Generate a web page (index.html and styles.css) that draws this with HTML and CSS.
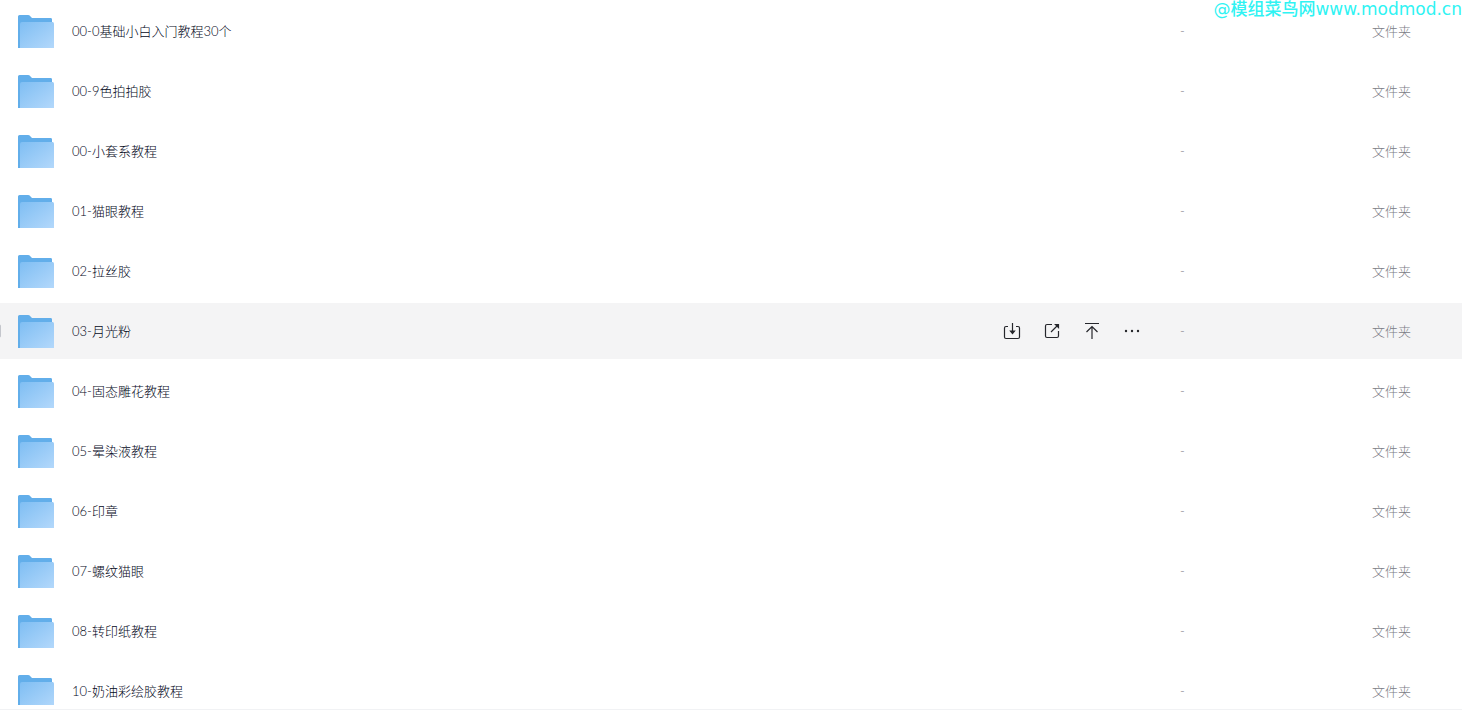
FILE: index.html
```
<!doctype html>
<html lang="zh-CN">
<head>
	<meta charset="utf-8">
	<title>文件列表</title>
	<link rel="stylesheet" href="styles.css">
</head>
<body>
	<!-- 图标 -->
	<svg class="sprite" aria-hidden="true">
		<defs>
			<linearGradient id="front" x1="0" y1="0" x2="1" y2="1">
				<stop offset="0" stop-color="#7fbef3"/>
				<stop offset="1" stop-color="#b3d8fb"/>
			</linearGradient>
			<symbol id="folder" viewBox="0 0 36 33">
				<path d="M0 1.5Q0 0 1.5 0H10Q11.500 0 12.300 1.200L14 3H33Q34 3 34 4.500V12H3V33H0Z" fill="#62aeea"/>
				<path d="M2 33V9Q2 7 4 7H34.500Q36 7 36 8.500V33Z" fill="url(#front)"/>
			</symbol>
			<symbol id="save" viewBox="0 0 18 18">
				<path d="M5 4.500H3Q1.500 4.500 1.500 6V15Q1.500 16.500 3 16.500H15Q16.500 16.500 16.500 15V6Q16.500 4.500 15 4.500H13M9.500 1V10"/>
				<path d="M7.500 9H11.500L9.500 11.500Z" fill="currentColor"/>
			</symbol>
			<symbol id="share" viewBox="0 0 18 18">
				<path d="M9 2.500H4Q2.500 2.500 2.500 4V14Q2.500 15.500 4 15.500H14Q15.500 15.500 15.500 14V9M8 10L14.500 3.500"/>
				<path d="M12.500 2.500H15.500V5.500Z" fill="currentColor"/>
			</symbol>
			<symbol id="top" viewBox="0 0 18 18">
				<path d="M2 1.500H16M9 17V4.500M3.500 10L9 4.500L14.500 10"/>
			</symbol>
			<symbol id="more" viewBox="0 0 18 18">
				<g fill="currentColor" stroke="none">
					<circle cx="3" cy="9" r="1.200"/>
					<circle cx="9" cy="9" r="1.200"/>
					<circle cx="15" cy="9" r="1.200"/>
				</g>
			</symbol>
		</defs>
	</svg>

	<div class="watermark">@模组菜鸟网www.modmod.cn</div>

	<!-- 文件列表 -->
	<div class="list">
		<table>
			<tbody>
				<tr>
					<td><div class="name"><svg class="folder"><use href="#folder"/></svg><a href="#">00-0基础小白入门教程30个</a></div></td>
					<td class="size">-</td>
					<td class="type">文件夹</td>
				</tr>
				<tr>
					<td><div class="name"><svg class="folder"><use href="#folder"/></svg><a href="#">00-9色拍拍胶</a></div></td>
					<td class="size">-</td>
					<td class="type">文件夹</td>
				</tr>
				<tr>
					<td><div class="name"><svg class="folder"><use href="#folder"/></svg><a href="#">00-小套系教程</a></div></td>
					<td class="size">-</td>
					<td class="type">文件夹</td>
				</tr>
				<tr>
					<td><div class="name"><svg class="folder"><use href="#folder"/></svg><a href="#">01-猫眼教程</a></div></td>
					<td class="size">-</td>
					<td class="type">文件夹</td>
				</tr>
				<tr>
					<td><div class="name"><svg class="folder"><use href="#folder"/></svg><a href="#">02-拉丝胶</a></div></td>
					<td class="size">-</td>
					<td class="type">文件夹</td>
				</tr>
				<!-- 当前行，显示复选框和操作按钮 -->
				<tr class="current">
					<td>
						<div class="name">
							<input class="check" type="checkbox" aria-label="选择 03-月光粉">
							<svg class="folder"><use href="#folder"/></svg>
							<a href="#">03-月光粉</a>
							<div class="actions">
								<button type="button" aria-label="下载"><svg><use href="#save"/></svg></button>
								<button type="button" aria-label="分享"><svg><use href="#share"/></svg></button>
								<button type="button" aria-label="置顶"><svg><use href="#top"/></svg></button>
								<button type="button" aria-label="更多"><svg><use href="#more"/></svg></button>
							</div>
						</div>
					</td>
					<td class="size">-</td>
					<td class="type">文件夹</td>
				</tr>
				<tr>
					<td><div class="name"><svg class="folder"><use href="#folder"/></svg><a href="#">04-固态雕花教程</a></div></td>
					<td class="size">-</td>
					<td class="type">文件夹</td>
				</tr>
				<tr>
					<td><div class="name"><svg class="folder"><use href="#folder"/></svg><a href="#">05-晕染液教程</a></div></td>
					<td class="size">-</td>
					<td class="type">文件夹</td>
				</tr>
				<tr>
					<td><div class="name"><svg class="folder"><use href="#folder"/></svg><a href="#">06-印章</a></div></td>
					<td class="size">-</td>
					<td class="type">文件夹</td>
				</tr>
				<tr>
					<td><div class="name"><svg class="folder"><use href="#folder"/></svg><a href="#">07-螺纹猫眼</a></div></td>
					<td class="size">-</td>
					<td class="type">文件夹</td>
				</tr>
				<tr>
					<td><div class="name"><svg class="folder"><use href="#folder"/></svg><a href="#">08-转印纸教程</a></div></td>
					<td class="size">-</td>
					<td class="type">文件夹</td>
				</tr>
				<tr>
					<td><div class="name"><svg class="folder"><use href="#folder"/></svg><a href="#">10-奶油彩绘胶教程</a></div></td>
					<td class="size">-</td>
					<td class="type">文件夹</td>
				</tr>
			</tbody>
		</table>
	</div>
	<div class="footer"></div>
</body>
</html>
```
FILE: styles.css
```
*{box-sizing:border-box;}
body{
	margin:0;
	height:100vh;
	display:flex;
	flex-direction:column;
	overflow:hidden;
	background-color:#fff;
	color:#03081a;
	font:300 13px/20px Lato,"Noto Sans CJK SC",sans-serif;
}
.sprite{
	position:absolute;
	width:0;
	height:0;
}
/* 右上角水印 */
.watermark{
	position:absolute;
	top:0;
	right:0;
	color:#2ff3f3;
	font:500 17px/18px "DejaVu Sans","Noto Sans CJK SC",sans-serif;
}
/* 列表 */
.list{
	flex:1;
	min-height:0;
	overflow:hidden;
}
table{
	width:100%;
	table-layout:fixed;
	border-collapse:separate;
	border-spacing:0;
}
td{
	height:60px;
	padding:0;
	border:solid #fff;
	border-width:3px 0 1px;
	vertical-align:middle;
}
.current td{background-color:#f4f4f5;}
.name{
	display:flex;
	align-items:center;
	padding-left:18px;
}
.name a{
	margin-left:18px;
	color:inherit;
	text-decoration:none;
}
.folder{
	width:36px;
	height:33px;
}
/* 复选框，只露出右边框 */
.check{
	appearance:none;
	width:14px;
	height:14px;
	margin:0 17px 0 -31px;
	border:1px solid #c4c6cc;
	border-radius:2px;
}
/* 操作按钮 */
.actions{
	display:flex;
	gap:22px;
	margin-left:auto;
	padding-right:39px;
}
.actions button{
	width:18px;
	height:18px;
	padding:0;
	border:0;
	background:none;
	color:#25262b;
	cursor:pointer;
}
.actions svg{
	display:block;
	width:18px;
	height:18px;
	fill:none;
	stroke:currentColor;
	stroke-width:1.2;
}
.size,.type{color:#7b7c86;}
.size{width:192px;}
.type{width:90px;}
/* 底部分隔线 */
.footer{
	height:10px;
	padding-top:4px;
}
.footer:before{
	content:"";
	display:block;
	border-top:1px solid #f1f2f4;
}
```
